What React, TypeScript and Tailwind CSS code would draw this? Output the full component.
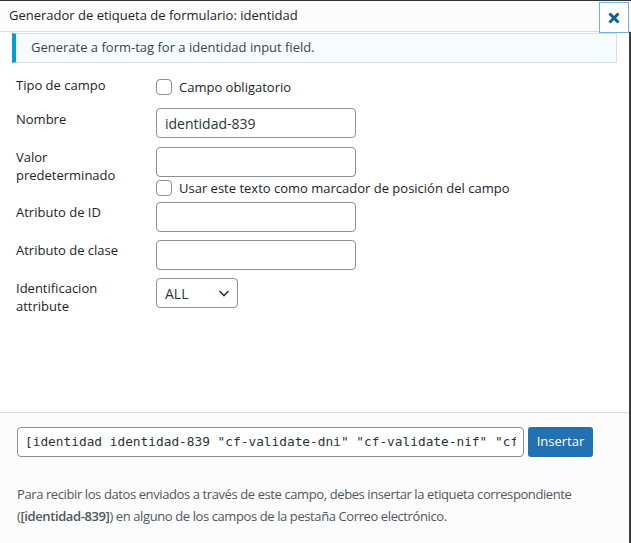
import React from "react";

const sans = "font-['Segoe_UI','Open_Sans','Noto_Sans',sans-serif]";

function Checkbox() {
  return (
    <span className="inline-block w-4 h-4 rounded-[4px] border border-[#8c8f94] bg-white shrink-0" />
  );
}

function TextInput({ value = "" }: { value?: string }) {
  return (
    <div className="w-[200px] h-[30px] rounded-[4px] border border-[#8c8f94] bg-white px-2 flex items-center text-[14px] text-[#2c3338]">
      {value}
    </div>
  );
}

function Row({
  label,
  children,
  className = "",
  labelClass = "pt-[1px]",
}: {
  label: React.ReactNode;
  children: React.ReactNode;
  className?: string;
  labelClass?: string;
}) {
  return (
    <div className={`flex ${className}`}>
      <div className={`w-[140px] shrink-0 text-[13px] leading-[18px] text-[#1d2327] ${labelClass}`}>{label}</div>
      <div className="flex-1">{children}</div>
    </div>
  );
}

export default function App() {
  return (
    <div className={`w-[631px] h-[543px] bg-white overflow-hidden ${sans} border-t border-[#333] flex flex-col relative`}>
      {/* header */}
      <div className="h-[31px] bg-[#fcfcfc] border-b border-[#dcdcde] flex items-center pl-[9px] shrink-0">
        <span className="text-[13px] text-[#1d2327]">Generador de etiqueta de formulario: identidad</span>
      </div>
      <button className="absolute right-[2px] top-[1px] w-[30px] h-[31px] border border-[#72aee6] bg-white flex items-center justify-center">
        <svg width="12" height="12" viewBox="0 0 12 12">
          <path d="M1.5 1.5L10.5 10.5M10.5 1.5L1.5 10.5" stroke="#135e96" strokeWidth="3" strokeLinecap="butt" />
        </svg>
      </button>
      <div className="absolute right-0 top-[31px] bottom-0 w-[2px] bg-[#3c3c3c]" />

      {/* body */}
      <div className="flex-1 pr-[2px]">
        <div className="mx-[12px] mt-[1px] h-[30px] bg-[#f6fbff] border border-[#dcdcde] border-l-4 border-l-[#00a0d2] flex items-center pl-[15px] text-[13px] text-[#3c434a]">
          Generate a form-tag for a identidad input field.
        </div>

        <div className="pl-[16px] flex flex-col">
          <Row label="Tipo de campo" className="mt-[13px]" labelClass="">
            <label className="flex items-center gap-[7px] text-[13px] text-[#1d2327] leading-[18px] mt-[2px]">
              <Checkbox />
              Campo obligatorio
            </label>
          </Row>
          <Row label="Nombre" className="mt-[12px]" labelClass="pt-[2px]">
            <TextInput value="identidad-839" />
          </Row>
          <Row
            label={
              <>
                Valor
                <br />
                predeterminado
              </>
            }
            className="mt-[9px]"
          >
            <TextInput />
            <label className="flex items-center gap-[7px] text-[13px] text-[#1d2327] leading-[18px] mt-[2px]">
              <Checkbox />
              Usar este texto como marcador de posición del campo
            </label>
          </Row>
          <Row label="Atributo de ID" className="mt-[5px]">
            <TextInput />
          </Row>
          <Row label="Atributo de clase" className="mt-[8px]">
            <TextInput />
          </Row>
          <Row
            label={
              <>
                Identificacion
                <br />
                attribute
              </>
            }
            className="mt-[8px]"
          >
            <div className="w-[82px] h-[30px] rounded-[4px] border border-[#8c8f94] bg-white flex items-center justify-between pl-[8px] pr-[6px] text-[14px] text-[#2c3338]">
              ALL
              <svg width="14" height="14" viewBox="0 0 14 14">
                <path d="M2.5 5L7 9.5L11.5 5" fill="none" stroke="#2c3338" strokeWidth="1.6" />
              </svg>
            </div>
          </Row>
        </div>
      </div>

      {/* footer */}
      <div className="h-[131px] shrink-0 bg-[#fcfcfc] border-t border-[#dcdcde] pl-[17px] pr-[2px]">
        <div className="flex items-center gap-[4px] mt-[14px]">
          <div className="w-[507px] h-[30px] rounded-[4px] border border-[#8c8f94] bg-white flex items-center pl-[7px] pr-[7px]">
            <span className="block overflow-hidden whitespace-nowrap w-full font-['DejaVu_Sans_Mono',monospace] text-[12.8px] text-[#2c3338]">
              [identidad identidad-839 "cf-validate-dni" "cf-validate-nif" "cf-validate-nie"]
            </span>
          </div>
          <div className="w-[65px] h-[30px] rounded-[3px] bg-[#2271b1] text-white text-[13px] flex items-center justify-center">
            Insertar
          </div>
        </div>
        <p className="mt-[26px] text-[13px] leading-[22px] text-[#50575e] tracking-[-0.4px]">
          Para recibir los datos enviados a través de este campo, debes insertar la etiqueta correspondiente
          <br />(<strong className="font-semibold">[identidad-839]</strong>) en alguno de los campos de la pestaña Correo electrónico.
        </p>
      </div>
    </div>
  );
}
